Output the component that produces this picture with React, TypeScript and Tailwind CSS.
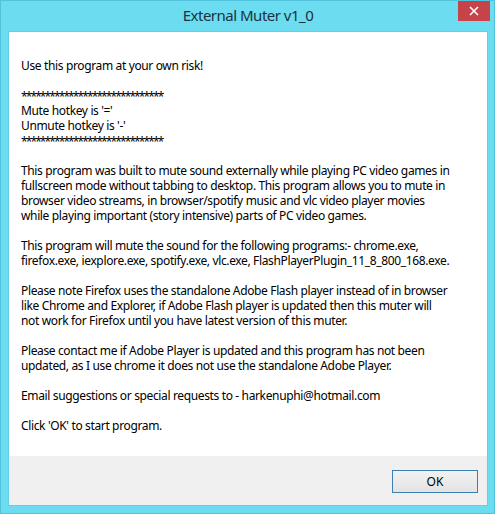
import React from "react";

const lines: string[] = [
  "Use this program at your own risk!",
  "",
  "******************************",
  "Mute hotkey is '='",
  "Unmute hotkey is '-'",
  "******************************",
  "",
  "This program was built to mute sound externally while playing PC video games in",
  "fullscreen mode without tabbing to desktop. This program allows you to mute in",
  "browser video streams, in browser/spotify music and vlc video player movies",
  "while playing important (story intensive) parts of PC video games.",
  "",
  "This program will mute the sound for the following programs:- chrome.exe,",
  "firefox.exe, iexplore.exe, spotify.exe, vlc.exe, FlashPlayerPlugin_11_8_800_168.exe.",
  "",
  "Please note Firefox uses the standalone Adobe Flash player instead of in browser",
  "like Chrome and Explorer, if Adobe Flash player is updated then this muter will",
  "not work for Firefox until you have latest version of this muter.",
  "",
  "Please contact me if Adobe Player is updated and this program has not been",
  "updated, as I use chrome it does not use the standalone Adobe Player.",
  "",
  "Email suggestions or special requests to - harkenuphi@hotmail.com",
  "",
  "Click 'OK' to start program.",
];

export default function App() {
  return (
    <div
      className="w-[495px] h-[514px] bg-[#6cdcf0] border border-[#52c3dc] flex flex-col relative"
      style={{ fontFamily: '"Noto Sans", "Open Sans", sans-serif' }}
    >
      <div className="h-[30px] flex items-center justify-center text-[15px] tracking-[-0.5px] text-[#1b3240] pl-[1px] pb-[1px]">
        External Muter v1_0
      </div>
      <div className="absolute top-0 left-[457px] w-[32px] h-[20px] bg-[#c7434a] flex items-center justify-center">
        <svg width="10" height="10" viewBox="0 0 10 10">
          <path d="M1 1 L9 9 M9 1 L1 9" stroke="#ffffff" strokeWidth="1.6" />
        </svg>
      </div>
      <div className="ml-[7px] mr-[6px] flex-1 mb-[7px] flex flex-col border border-[#62cfe6]">
        <div className="flex-1 bg-white pl-[12px] pt-[26px] text-[12px] leading-[15px] tracking-[-0.36px] text-black">
          {lines.map((l, i) =>
            l.startsWith("*") ? (
              <div key={i} className="whitespace-pre h-[15px] tracking-[-1.9px] pt-[1px]">
                {l}
              </div>
            ) : (
              <div key={i} className="whitespace-pre h-[15px]">
                {l === "" ? "\u00a0" : l}
              </div>
            )
          )}
        </div>
        <div className="h-[49px] bg-[#f0f0f0] flex items-start justify-end pt-[14px] pr-[9px]">
          <div className="w-[86px] h-[23px] border border-[#3c7fb1] bg-gradient-to-b from-[#f2f2f2] to-[#e3e3e3] flex items-center justify-center text-[12px] text-black">
            OK
          </div>
        </div>
      </div>
    </div>
  );
}
